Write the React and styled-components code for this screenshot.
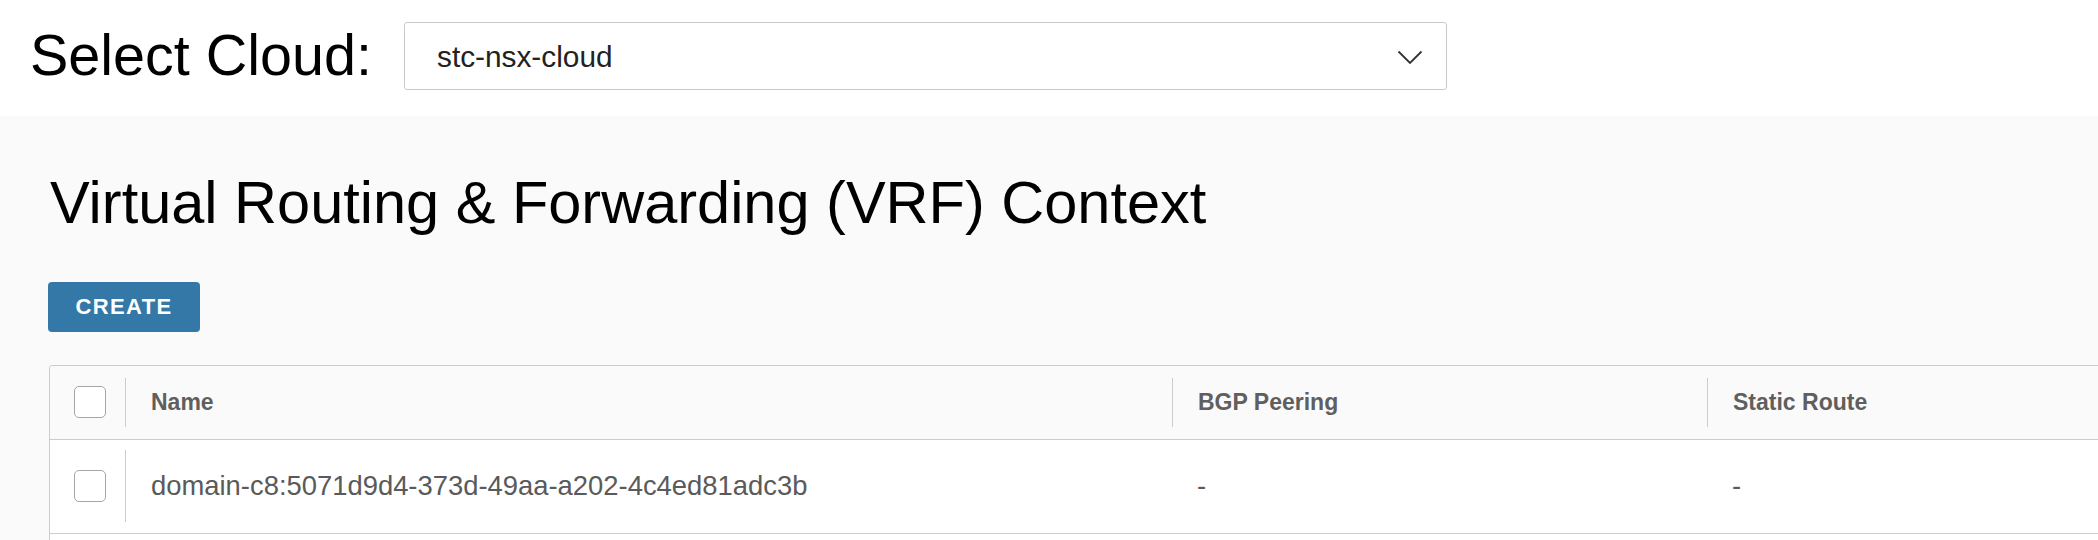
import React from 'react'
import styled, { createGlobalStyle } from 'styled-components';

const GlobalStyle = createGlobalStyle`
    html, body {
        margin: 0;
        padding: 0;
        background: #fafafa;
        overflow: hidden;
    }
    body {
        font-family: "Liberation Sans", Arial, sans-serif;
        color: #000;
    }
`;

const columns = ['Name', 'BGP Peering', 'Static Route', ''];

const rows = [
    { id: 1, cells: ['domain-c8:5071d9d4-373d-49aa-a202-4c4ed81adc3b', '-', '-', ''] },
];

function Chevron() {
    return (
        <svg width="26" height="15" viewBox="0 0 26 15" fill="none">
            <polyline points="1.5,1.5 13,13 24.5,1.5" stroke="#333" strokeWidth="1.8" strokeLinejoin="miter" />
        </svg>
    )
}

function App() {
  return (
    <Page>
        <GlobalStyle />
        <CloudBar>
            <CloudLabel>Select Cloud:</CloudLabel>
            <CloudSelect>
                <span>stc-nsx-cloud</span>
                <Chevron />
            </CloudSelect>
        </CloudBar>

        <Content>
            <Title>Virtual Routing &amp; Forwarding (VRF) Context</Title>
            <CreateButton>CREATE</CreateButton>

            <Grid>
                <HeadRow>
                    <CheckCell><Checkbox /></CheckCell>
                    {columns.map((col, i) => (
                        <Cell key={i}>
                            <Divider $tall={false} />
                            <HeadText>{col}</HeadText>
                        </Cell>
                    ))}
                </HeadRow>
                {rows.map((row) => (
                    <BodyRow key={row.id}>
                        <CheckCell><Checkbox /></CheckCell>
                        {row.cells.map((value, i) => (
                            <Cell key={i}>
                                {i === 0 && <Divider $tall={true} />}
                                <CellText>{value}</CellText>
                            </Cell>
                        ))}
                    </BodyRow>
                ))}
                <BodyRow />
            </Grid>
        </Content>
    </Page>
  )
}

const Page = styled.div`
    width: 2098px;
    height: 540px;
    overflow: hidden;
`;

const CloudBar = styled.div`
    height: 116px;
    box-sizing: border-box;
    background: #fff;
    display: flex;
    align-items: flex-start;
    padding: 22px 0 0 30px;
`;

const CloudLabel = styled.div`
    height: 68px;
    display: flex;
    align-items: center;
    font-size: 57.5px;
    line-height: 1;
    color: #000;
    width: 374px;
`;

const CloudSelect = styled.div`
    width: 1043px;
    height: 68px;
    box-sizing: border-box;
    border: 1px solid #c9c9c9;
    border-radius: 3px;
    background: #fff;
    display: flex;
    align-items: center;
    justify-content: space-between;
    padding: 2px 23px 0 32px;
    font-size: 29.8px;
    color: #222;
`;

const Content = styled.div`
    padding: 57px 0 0 48px;
`;

const Title = styled.h1`
    margin: 0 0 49px 2px;
    font-size: 59.5px;
    font-weight: 400;
    line-height: 1;
    color: #000;
`;

const CreateButton = styled.button`
    display: block;
    width: 152px;
    height: 50px;
    padding: 0;
    border: none;
    border-radius: 4px;
    background: #3478a8;
    color: #fff;
    font-family: "Liberation Sans", Arial, sans-serif;
    font-size: 22px;
    font-weight: 700;
    letter-spacing: 1.4px;
    margin-bottom: 33px;
`;

const Grid = styled.div`
    margin-left: 1px;
    width: 2200px;
    border: 1px solid #ccc;
    border-radius: 3px;
    background: #fff;
`;

const HeadRow = styled.div`
    display: grid;
    grid-template-columns: 75px 1047px 535px 535px 1fr;
    height: 73px;
    background: #fafafa;
    border-bottom: 1px solid #ccc;
    border-radius: 3px 3px 0 0;
`;

const BodyRow = styled.div`
    display: grid;
    grid-template-columns: 75px 1047px 535px 535px 1fr;
    height: 93px;
    border-bottom: 1px solid #ccc;
`;

const CheckCell = styled.div`
    display: flex;
    align-items: center;
    padding-left: 24px;
`;

const Checkbox = styled.span`
    display: block;
    width: 30px;
    height: 30px;
    border: 1px solid #a6a6a6;
    border-radius: 5px;
    background: #fff;
`;

const Cell = styled.div`
    display: flex;
    align-items: center;
    min-width: 0;
`;

const Divider = styled.span`
    flex: none;
    width: 1px;
    height: ${(p) => (p.$tall ? '72px' : '49px')};
    background: #ccc;
`;

const HeadText = styled.span`
    margin-left: 25px;
    font-size: 23px;
    font-weight: 700;
    color: #5f5f5f;
`;

const CellText = styled.span`
    margin-left: 25px;
    font-size: 27.4px;
    color: #5a5a5a;
    white-space: nowrap;
`;

export default App
